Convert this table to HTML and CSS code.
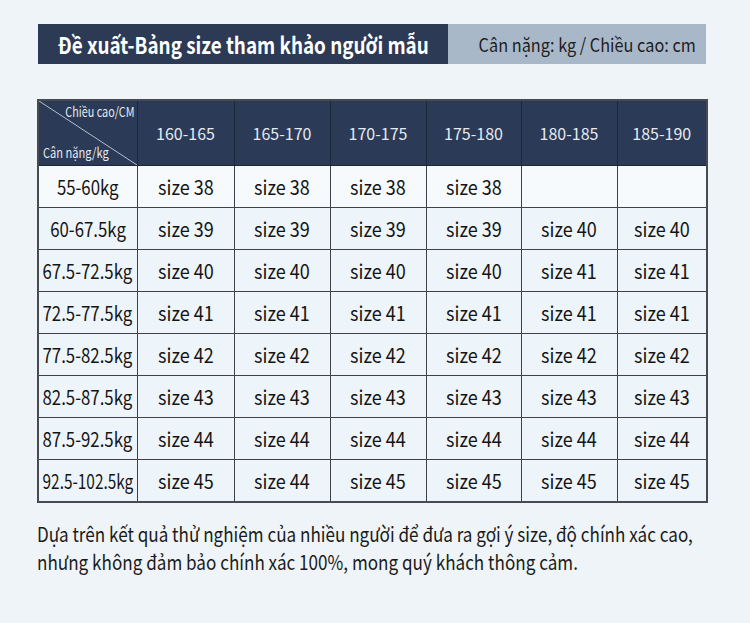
FILE: index.html
```html
<!DOCTYPE html>
<html lang="vi">
<head>
<meta charset="utf-8">
<link rel="stylesheet" href="styles.css">
</head>
<body>
<div class="page">
  <div class="titlebar">
    <div class="title-main"><span class="sq">Đề xuất-Bảng size tham khảo người mẫu</span></div>
    <div class="title-unit"><span class="sq sq-r">Cân nặng: kg / Chiều cao: cm</span></div>
  </div>
  <table class="sizes">
    <colgroup>
      <col class="c0"><col class="c1"><col class="c2"><col class="c3"><col class="c4"><col class="c5"><col class="c6">
    </colgroup>
    <thead>
      <tr>
        <th class="corner"><div class="corner-in"><span class="sq ch">Chiều cao/CM</span><span class="sq cw">Cân nặng/kg</span></div></th>
        <th>160-165</th><th>165-170</th><th>170-175</th><th>175-180</th><th>180-185</th><th>185-190</th>
      </tr>
    </thead>
    <tbody>
      <tr class="first"><td><span class="sq">55-60kg</span></td><td><span class="sq">size 38</span></td><td><span class="sq">size 38</span></td><td><span class="sq">size 38</span></td><td><span class="sq">size 38</span></td><td></td><td></td></tr>
      <tr><td><span class="sq">60-67.5kg</span></td><td><span class="sq">size 39</span></td><td><span class="sq">size 39</span></td><td><span class="sq">size 39</span></td><td><span class="sq">size 39</span></td><td><span class="sq">size 40</span></td><td><span class="sq">size 40</span></td></tr>
      <tr><td><span class="sq">67.5-72.5kg</span></td><td><span class="sq">size 40</span></td><td><span class="sq">size 40</span></td><td><span class="sq">size 40</span></td><td><span class="sq">size 40</span></td><td><span class="sq">size 41</span></td><td><span class="sq">size 41</span></td></tr>
      <tr><td><span class="sq">72.5-77.5kg</span></td><td><span class="sq">size 41</span></td><td><span class="sq">size 41</span></td><td><span class="sq">size 41</span></td><td><span class="sq">size 41</span></td><td><span class="sq">size 41</span></td><td><span class="sq">size 41</span></td></tr>
      <tr><td><span class="sq">77.5-82.5kg</span></td><td><span class="sq">size 42</span></td><td><span class="sq">size 42</span></td><td><span class="sq">size 42</span></td><td><span class="sq">size 42</span></td><td><span class="sq">size 42</span></td><td><span class="sq">size 42</span></td></tr>
      <tr><td><span class="sq">82.5-87.5kg</span></td><td><span class="sq">size 43</span></td><td><span class="sq">size 43</span></td><td><span class="sq">size 43</span></td><td><span class="sq">size 43</span></td><td><span class="sq">size 43</span></td><td><span class="sq">size 43</span></td></tr>
      <tr><td><span class="sq">87.5-92.5kg</span></td><td><span class="sq">size 44</span></td><td><span class="sq">size 44</span></td><td><span class="sq">size 44</span></td><td><span class="sq">size 44</span></td><td><span class="sq">size 44</span></td><td><span class="sq">size 44</span></td></tr>
      <tr><td><span class="sq tight">92.5-102.5kg</span></td><td><span class="sq">size 45</span></td><td><span class="sq">size 44</span></td><td><span class="sq">size 45</span></td><td><span class="sq">size 45</span></td><td><span class="sq">size 45</span></td><td><span class="sq">size 45</span></td></tr>
    </tbody>
  </table>
  <p class="note"><span class="sq line">Dựa trên kết quả thử nghiệm của nhiều người để đưa ra gợi ý size, độ chính xác cao,</span><span class="sq line">nhưng không đảm bảo chính xác 100%, mong quý khách thông cảm.</span></p>
</div>
</body>
</html>
```

FILE: styles.css
```css
html, body {
  margin: 0;
  padding: 0;
  background: #eef4f8;
}
body {
  width: 750px;
  height: 623px;
  overflow: hidden;
  font-family: "Noto Sans CJK SC", "Noto Sans", sans-serif;
  color: #1d1d1d;
}
.page {
  padding: 24px 44px 0 38px;
}
.sq {
  display: inline-block;
  white-space: nowrap;
  transform: scaleX(0.86);
}
.titlebar {
  display: flex;
  height: 40px;
  width: 668px;
}
.title-main {
  width: 410px;
  flex: none;
  background: #2c3a56;
  color: #ffffff;
  font-weight: 700;
  font-size: 23px;
  display: flex;
  align-items: center;
  justify-content: center;
}
.title-main .sq {
  transform: scaleX(0.82);
}
.title-unit {
  flex: 1;
  background: #a9b8c9;
  color: #1e1e1e;
  font-size: 18.5px;
  display: flex;
  align-items: center;
  justify-content: flex-end;
  padding-right: 10px;
}
.title-unit .sq {
  transform: scaleX(0.88);
  transform-origin: right center;
}
.sizes {
  margin-top: 35px;
  margin-left: -1px;
  border-collapse: collapse;
  table-layout: fixed;
  width: 669px;
  border: 2px solid #474a50;
}
.c0 { width: 99px; }
.c1 { width: 97px; }
.c2 { width: 96px; }
.c3 { width: 96px; }
.c4 { width: 95px; }
.c5 { width: 96px; }
.c6 { width: 90px; }
.sizes th {
  background: #2b3a56;
  color: #e6eaf0;
  font-weight: 400;
  font-size: 16px;
  height: 64px;
  padding: 0;
  border: 1px solid #1e2738;
}
.sizes td {
  background: #eef5fa;
  height: 41px;
  padding: 0;
  text-align: center;
  font-size: 20px;
  color: #141414;
  border: 1.5px solid #3f4247;
  white-space: nowrap;
}
.sizes td .sq {
  margin: 0 -30px;
  transform: scaleX(0.9);
}
.sizes td:first-child .sq {
  transform: scaleX(0.84);
}
.sizes td:first-child .sq.tight {
  transform: scaleX(0.77);
}
.sizes tr.first td {
  background: #f7fafc;
}
.sizes th.corner {
  background-color: #2b3a56;
  background-image: linear-gradient(to top right, transparent calc(50% - 0.8px), #b9c3d0 50%, transparent calc(50% + 0.8px));
}
.corner-in {
  display: flex;
  flex-direction: column;
  justify-content: space-between;
  height: 58px;
  padding: 2px 2px 4px 4px;
}
.ch {
  align-self: flex-end;
  font-size: 13.5px;
  line-height: 17px;
  transform: scaleX(0.8);
  transform-origin: right center;
}
.cw {
  align-self: flex-start;
  font-size: 13.5px;
  line-height: 17px;
  transform: scaleX(0.82);
  transform-origin: left center;
}
.note {
  margin: 16px 0 0 -1px;
  font-size: 20.5px;
  line-height: 28px;
  color: #1a1a1a;
}
.note .line {
  display: block;
  transform: scaleX(0.834);
  transform-origin: left center;
}
```
